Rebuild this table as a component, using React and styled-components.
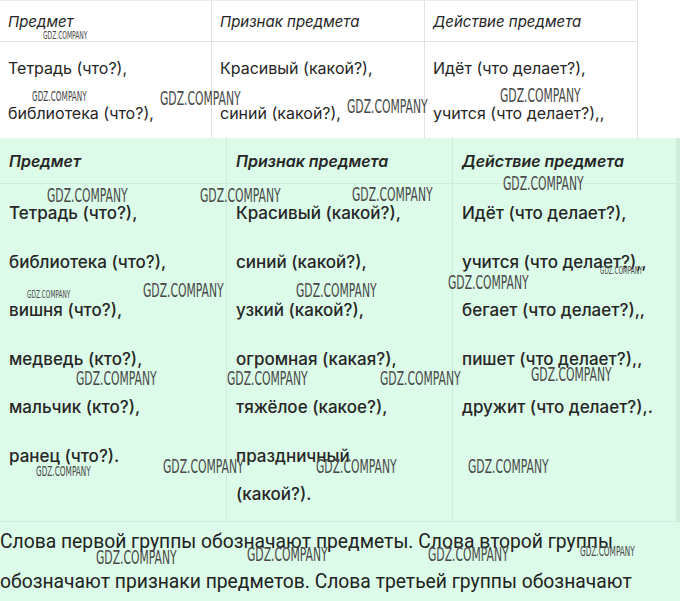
import React from "react";
import styled, { createGlobalStyle } from "styled-components";

const Global = createGlobalStyle`
  body {
    margin: 0;
    background: #fff;
    font-family: Inter, "Noto Sans", sans-serif;
    color: #262626;
  }
`;

const Page = styled.div`
  position: relative;
  width: 680px;
  height: 601px;
  overflow: hidden;
`;

const TopTable = styled.div`
  display: grid;
  grid-template-columns: 212px 213px 213px;
  grid-template-rows: 41px 96px;
  width: 638px;
  border-top: 1px solid #ececec;
  box-sizing: border-box;
`;

const TopHead = styled.div`
  display: flex;
  align-items: center;
  padding: 0 8px;
  font-size: 15px;
  font-style: italic;
  border-bottom: 1px solid #e2e2e2;
  border-right: 1px solid #e2e2e2;
`;

const TopCell = styled.div`
  padding: 4px 8px 0;
  font-size: 16px;
  line-height: 45px;
  border-right: 1px solid #e2e2e2;
  white-space: nowrap;
`;

const GreenTable = styled.div`
  display: grid;
  grid-template-columns: 227px 226px 227px;
  grid-template-rows: 46px 337px;
  background: #dcfce9;
  border-right: 4px solid #d0efdc;
  border-bottom: 1px solid #cdecd9;
  box-sizing: border-box;
`;

const GreenHead = styled.div`
  display: flex;
  align-items: center;
  padding: 0 9px;
  font-size: 16px;
  font-weight: 600;
  font-style: italic;
  border-bottom: 1px solid #cdecd9;
  border-right: 1px solid #cdecd9;
`;

const GreenCell = styled.div`
  display: flex;
  flex-direction: column;
  gap: 10.5px;
  padding: 10px 9px 0;
  border-right: 1px solid #cdecd9;
`;

const Item = styled.div`
  font-size: 17px;
  font-weight: 500;
  line-height: 38px;
  white-space: nowrap;
`;

const Summary = styled.p`
  margin: 0;
  background: #dcfce9;
  font-family: Roboto, sans-serif;
  font-size: 19.3px;
  line-height: 40px;
  color: #222;
`;

const Watermark = styled.span`
  position: absolute;
  left: ${(p) => p.$x}px;
  top: ${(p) => p.$y - p.$size * 0.56}px;
  font-family: "Liberation Sans Narrow", "DejaVu Sans Condensed", sans-serif;
  font-size: ${(p) => p.$size}px;
  line-height: 1;
  color: #484848;
  transform: scaleX(0.6);
  transform-origin: left center;
  white-space: nowrap;
  pointer-events: none;
`;

const topCols = [
  { head: "Предмет", lines: ["Тетрадь (что?),", "библиотека (что?),"] },
  { head: "Признак предмета", lines: ["Красивый (какой?),", "синий (какой?),"] },
  { head: "Действие предмета", lines: ["Идёт (что делает?),", "учится (что делает?),,"] },
];

const greenCols = [
  {
    head: "Предмет",
    items: ["Тетрадь (что?),", "библиотека (что?),", "вишня (что?),", "медведь (кто?),", "мальчик (кто?),", "ранец (что?)."],
  },
  {
    head: "Признак предмета",
    items: ["Красивый (какой?),", "синий (какой?),", "узкий (какой?),", "огромная (какая?),", "тяжёлое (какое?),", ["праздничный", "(какой?)."]],
  },
  {
    head: "Действие предмета",
    items: ["Идёт (что делает?),", "учится (что делает?),,", "бегает (что делает?),,", "пишет (что делает?),,", "дружит (что делает?),."],
  },
];

// x, center y, width of the stamp
const marks = [
  [43, 36, 43], [32, 98, 53], [160, 99, 78], [347, 107, 78], [500, 96, 78],
  [47, 196, 78], [200, 196, 78], [352, 195, 78], [503, 184, 78], [600, 271, 41],
  [448, 283, 78], [27, 296, 42], [143, 291, 78], [296, 291, 78],
  [76, 379, 78], [227, 379, 78], [380, 379, 78], [531, 375, 78],
  [36, 473, 53], [163, 467, 78], [316, 467, 78], [468, 467, 78],
  [96, 558, 78], [247, 555, 78], [428, 555, 78], [580, 553, 53],
];

export default function App() {
  return (
    <Page>
      <Global />
      <TopTable>
        {topCols.map((c) => (
          <TopHead key={c.head}>{c.head}</TopHead>
        ))}
        {topCols.map((c) => (
          <TopCell key={c.head}>
            {c.lines.map((l) => (
              <div key={l}>{l}</div>
            ))}
          </TopCell>
        ))}
      </TopTable>
      <GreenTable>
        {greenCols.map((c) => (
          <GreenHead key={c.head}>{c.head}</GreenHead>
        ))}
        {greenCols.map((c) => (
          <GreenCell key={c.head}>
            {c.items.map((it, i) => (
              <Item key={i}>
                {Array.isArray(it) ? (
                  <>
                    {it[0]}
                    <br />
                    {it[1]}
                  </>
                ) : (
                  it
                )}
              </Item>
            ))}
          </GreenCell>
        ))}
      </GreenTable>
      <Summary>
        Слова первой группы обозначают предметы. Слова второй группы обозначают признаки предметов. Слова третьей группы обозначают
      </Summary>
      {marks.map(([x, y, w], i) => (
        <Watermark key={i} $x={x} $y={y} $size={w / 3.9}>
          GDZ.COMPANY
        </Watermark>
      ))}
    </Page>
  );
}
